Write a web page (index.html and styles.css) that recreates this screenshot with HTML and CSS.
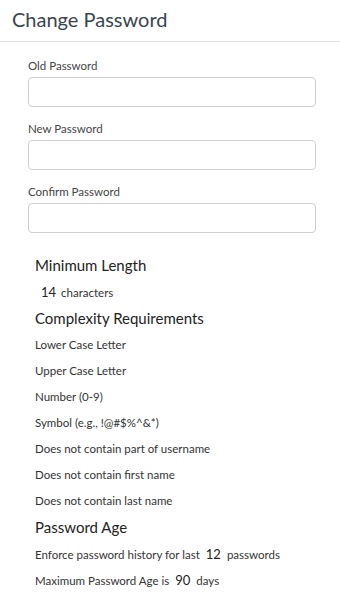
FILE: index.html
```html
<!DOCTYPE html>
<html lang="en">
<head>
<meta charset="utf-8">
<title>Change Password</title>
<link rel="stylesheet" href="styles.css">
</head>
<body>
<header class="header">
  <h1 class="title">Change Password</h1>
</header>
<form class="form">
  <div class="field">
    <label class="label">Old Password</label>
    <input class="input" type="password">
  </div>
  <div class="field">
    <label class="label">New Password</label>
    <input class="input" type="password">
  </div>
  <div class="field">
    <label class="label">Confirm Password</label>
    <input class="input" type="password">
  </div>
</form>
<section class="policy">
  <h2 class="heading">Minimum Length</h2>
  <div class="item"><span class="num num-first">14</span>characters</div>
  <h2 class="heading">Complexity Requirements</h2>
  <div class="item">Lower Case Letter</div>
  <div class="item">Upper Case Letter</div>
  <div class="item">Number (0-9)</div>
  <div class="item">Symbol (e.g., !@#$%^&amp;*)</div>
  <div class="item">Does not contain part of username</div>
  <div class="item">Does not contain first name</div>
  <div class="item">Does not contain last name</div>
  <h2 class="heading">Password Age</h2>
  <div class="item">Enforce password history for last<span class="num">12</span>passwords</div>
  <div class="item">Maximum Password Age is<span class="num">90</span>days</div>
</section>
</body>
</html>
```
FILE: styles.css
```css
html, body {
  margin: 0;
  padding: 0;
  background: #ffffff;
}
body {
  font-family: Lato, "Open Sans", "Liberation Sans", sans-serif;
  color: #333333;
}
.header {
  height: 41px;
  border-bottom: 1px solid #e4e4e4;
  padding: 0 12px;
}
.title {
  margin: 0;
  font-size: 20px;
  font-weight: 400;
  line-height: 38px;
  color: #3a4450;
}
.form {
  padding: 17px 24px 0 28px;
}
.field {
  display: flex;
  flex-direction: column;
  margin-bottom: 15px;
}
.field:last-child {
  margin-bottom: 0;
}
.label {
  font-size: 11.5px;
  line-height: 14px;
  color: #444444;
  margin-bottom: 4px;
}
.input {
  box-sizing: border-box;
  width: 288px;
  height: 30px;
  border: 1px solid #cfcfcf;
  border-radius: 4px;
  margin: 0;
  padding: 0 8px;
  background: #fff;
}
.policy {
  padding: 19px 0 0 35px;
}
.heading {
  margin: 0;
  font-size: 15px;
  font-weight: 400;
  line-height: 27px;
  color: #222222;
}
.item {
  font-size: 11.5px;
  line-height: 26px;
  height: 26px;
  color: #333333;
}
.num {
  font-size: 13px;
  padding: 0 6px;
  color: #222222;
}
.num-first {
  padding-left: 6px;
  padding-right: 5px;
}
```
